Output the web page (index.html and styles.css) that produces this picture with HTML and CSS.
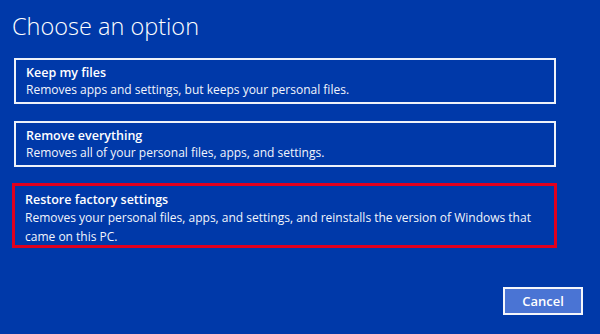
FILE: index.html
```html
<!DOCTYPE html>
<html lang="en">
<head>
  <meta charset="UTF-8" />
  <meta name="viewport" content="width=device-width, initial-scale=1.0"/>
  <title>Choose an option</title>
  <link rel="stylesheet" href="styles.css">
</head>
<body>
  <h1 class="heading">Choose an option</h1>

  <div class="options">
    <div class="option">
      <div class="option-title">Keep my files</div>
      <div class="option-desc">Removes apps and settings, but keeps your personal files.</div>
    </div>
    <div class="option">
      <div class="option-title">Remove everything</div>
      <div class="option-desc">Removes all of your personal files, apps, and settings.</div>
    </div>
    <div class="option highlight">
      <div class="option-title">Restore factory settings</div>
      <div class="option-desc">Removes your personal files, apps, and settings, and reinstalls the version of Windows that came on this PC.</div>
    </div>
  </div>

  <div class="actions">
    <button class="cancel">Cancel</button>
  </div>
</body>
</html>
```

FILE: styles.css
```css
body {
  margin: 0;
  width: 600px;
  height: 334px;
  overflow: hidden;
  background-color: #0039a9;
  color: #fff;
  font-family: 'Open Sans', 'Noto Sans', sans-serif;
}

.heading {
  margin: 0;
  padding: 11px 0 0 12px;
  font-size: 23.5px;
  font-weight: 300;
  line-height: 30px;
  letter-spacing: 0;
}

.options {
  display: flex;
  flex-direction: column;
  gap: 17px;
  margin: 17px 0 0 14px;
  width: 542px;
}

.option {
  box-sizing: border-box;
  border: 2px solid #eef2fa;
  padding: 5px 10px 0 10px;
  height: 46px;
}

.option-title {
  font-size: 12.5px;
  font-weight: 600;
  line-height: 16px;
}

.option-desc {
  font-size: 12px;
  line-height: 18px;
  color: #f2f5fc;
}

.option.highlight {
  border: 3px solid #e0001e;
  margin: -1px -1px 0 -2px;
  padding: 6px 10px 0 10px;
  height: 65px;
}

.highlight .option-desc {
  line-height: 19px;
}

.actions {
  display: flex;
  justify-content: flex-end;
  padding: 39px 17px 0 0;
}

.cancel {
  width: 80px;
  height: 28px;
  background-color: #4a74d4;
  color: #fff;
  border: 2px solid #f4f6fb;
  font-family: 'Open Sans', 'Noto Sans', sans-serif;
  font-size: 13px;
  font-weight: 600;
  padding: 0;
}
```
